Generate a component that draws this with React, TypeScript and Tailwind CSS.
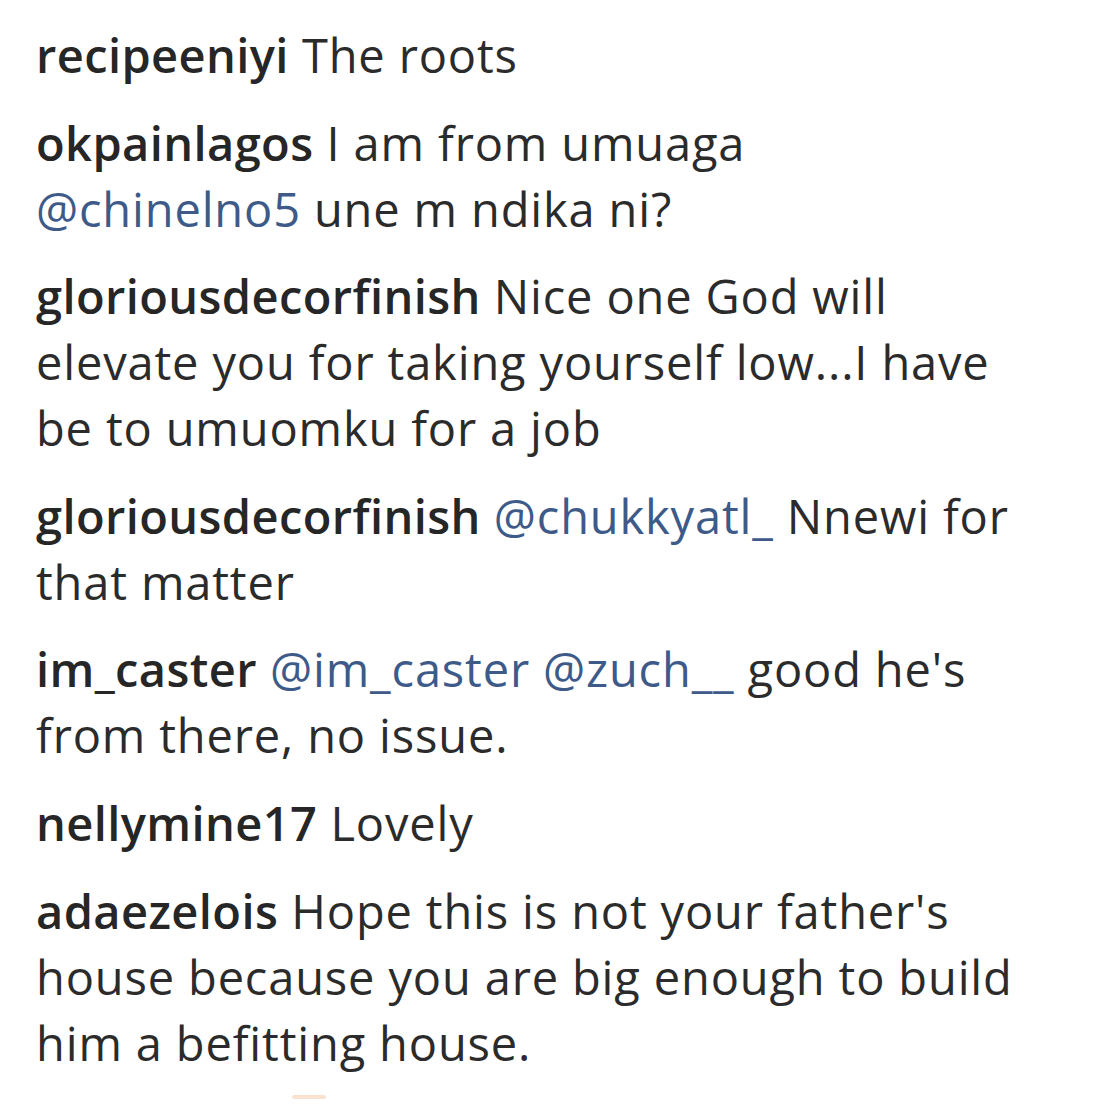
import type { ReactNode } from 'react';

interface Comment {
  user: string;
  lines: ReactNode[];
}

function Mention({ children }: { children: ReactNode }) {
  return <span className="text-[#3d5a89]">{children}</span>;
}

const comments: Comment[] = [
  { user: 'recipeeniyi', lines: ['The roots'] },
  {
    user: 'okpainlagos',
    lines: [
      'I am from umuaga',
      <>
        <Mention>@chinelno5</Mention> une m ndika ni?
      </>,
    ],
  },
  {
    user: 'gloriousdecorfinish',
    lines: [
      'Nice one God will',
      'elevate you for taking yourself low...I have',
      'be to umuomku for a job',
    ],
  },
  {
    user: 'gloriousdecorfinish',
    lines: [
      <>
        <Mention>@chukkyatl_</Mention> Nnewi for
      </>,
      'that matter',
    ],
  },
  {
    user: 'im_caster',
    lines: [
      <>
        <Mention>@im_caster</Mention> <Mention>@zuch__</Mention> good he's
      </>,
      'from there, no issue.',
    ],
  },
  { user: 'nellymine17', lines: ['Lovely'] },
  {
    user: 'adaezelois',
    lines: [
      "Hope this is not your father's",
      'house because you are big enough to build',
      'him a befitting house.',
    ],
  },
];

function CommentRow({ comment }: { comment: Comment }) {
  const [first, ...rest] = comment.lines;
  return (
    <div className="flex flex-col">
      <div className="whitespace-nowrap">
        <span className="font-semibold text-[#262626] tracking-[0.4px]">{comment.user}</span>{' '}
        {first}
      </div>
      {rest.map((line, i) => (
        <div key={i} className="whitespace-nowrap">
          {line}
        </div>
      ))}
    </div>
  );
}

export default function App() {
  return (
    <div
      className="w-[1120px] h-[1120px] bg-white overflow-hidden pl-[36px] pt-[22px] text-[47px] leading-[66px] tracking-[0.85px] text-[#2b2b2b]"
      style={{ fontFamily: '"Open Sans", "Noto Sans", sans-serif' }}
    >
      <div className="flex flex-col gap-[21.6px]">
        {comments.map((c, i) => (
          <CommentRow key={i} comment={c} />
        ))}
      </div>
      {/* cut-off emoji peeking at the bottom */}
      <div className="mt-[19px] ml-[256px] w-[34px] h-[4px] rounded-full bg-[#f9e2cf]" />
    </div>
  );
}
